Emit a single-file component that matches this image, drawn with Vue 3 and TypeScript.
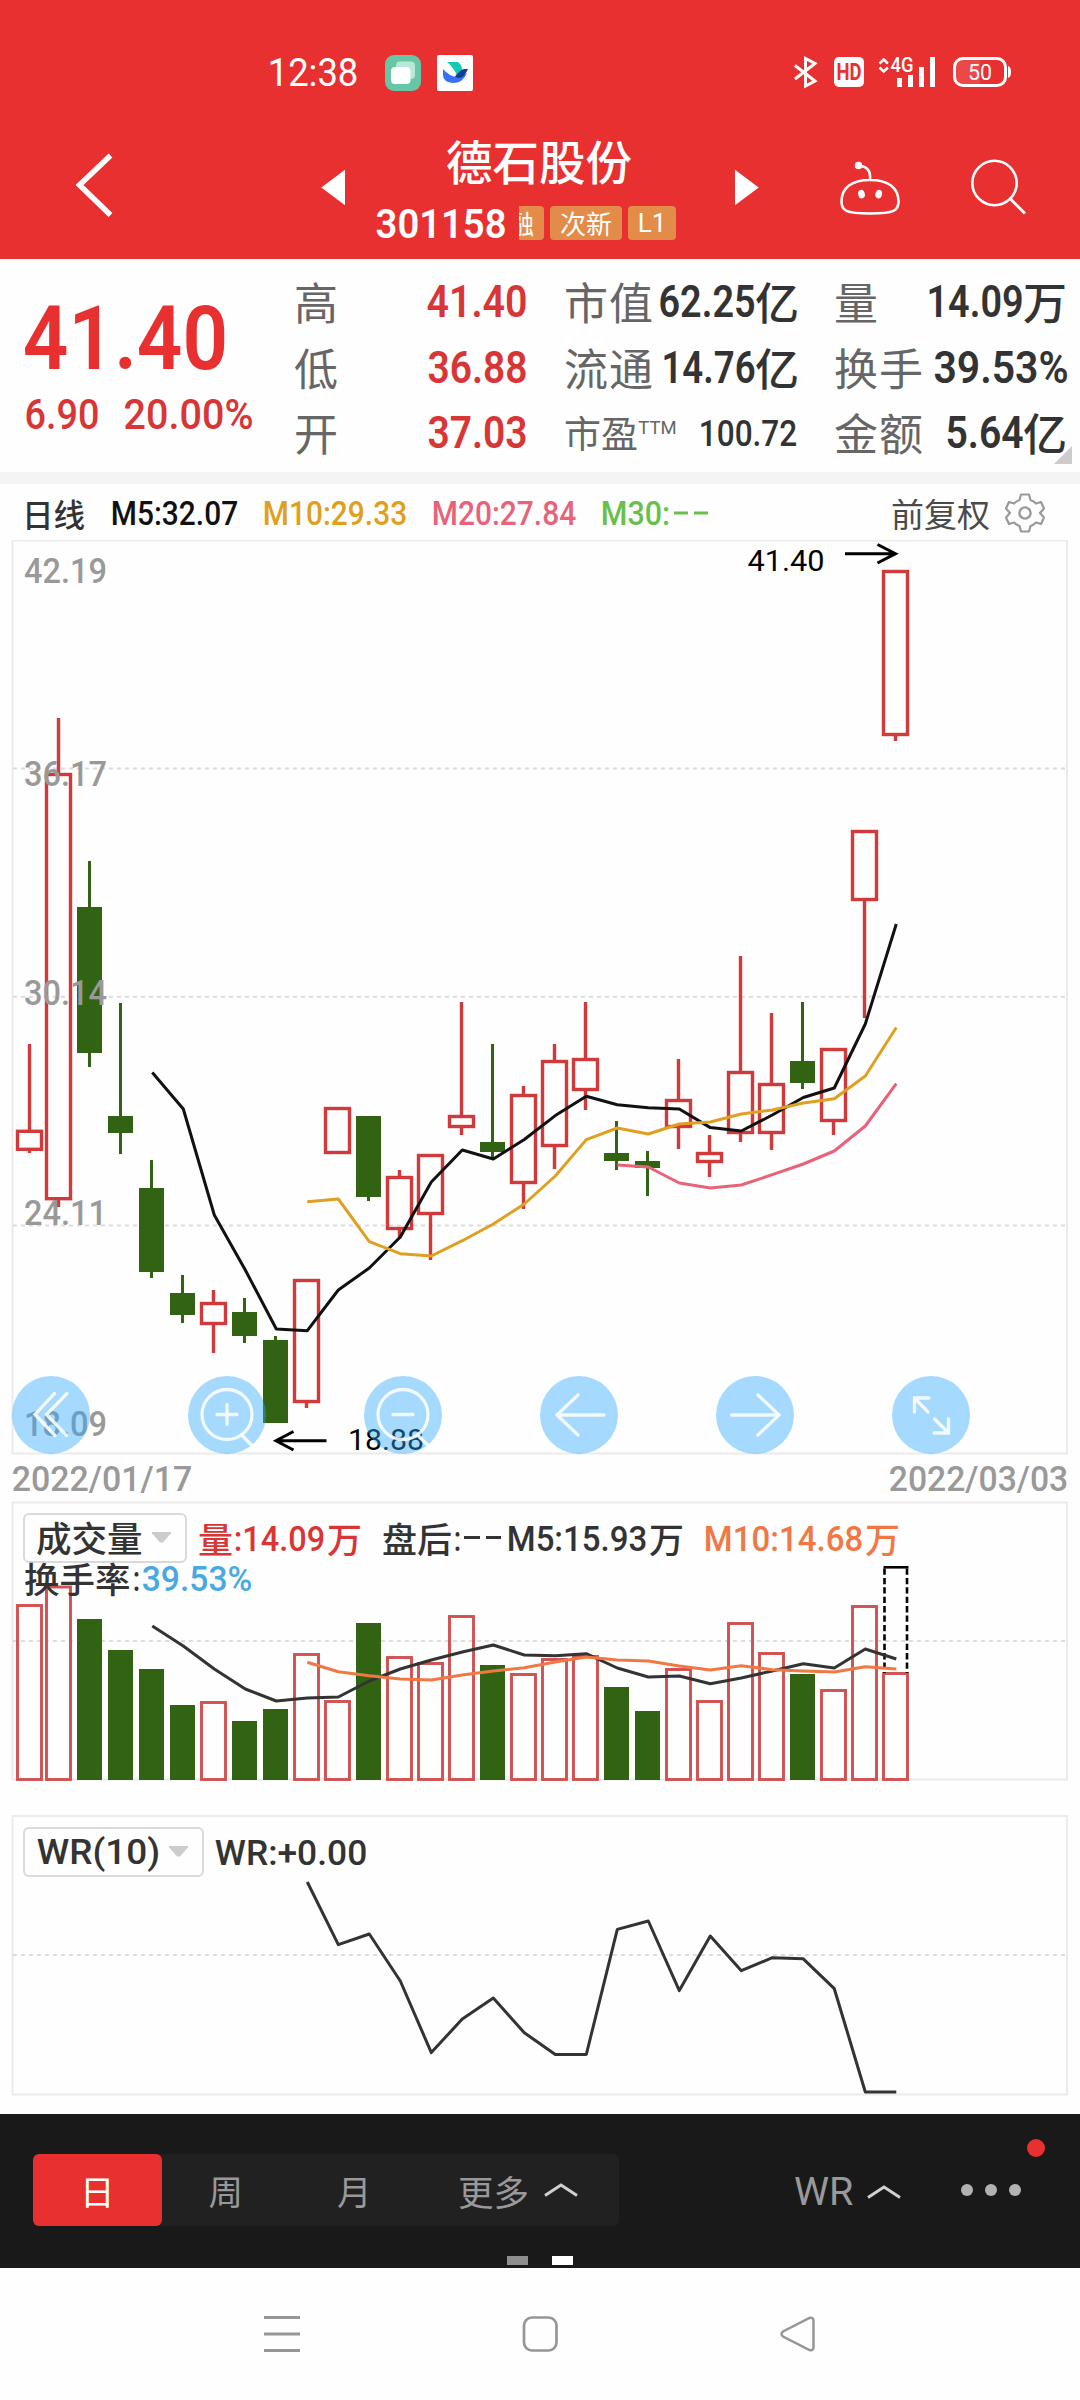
<script setup lang="ts">
import { h, type FunctionalComponent } from 'vue'

interface FitProps {
  t: string
  w: number
  c: number
  weight?: number
}

/* Condensed label: w is the drawn width, c the capital height. */
const Fit: FunctionalComponent<FitProps> = (p) => {
  const size = p.c / 0.711
  const side = size * 0.035
  return h('svg', { class: 'fit', width: p.w, height: p.c, overflow: 'visible' }, [
    h(
      'text',
      {
        x: -side,
        y: p.c,
        'font-size': size,
        'font-weight': p.weight ?? 500,
        'font-family': 'Roboto, sans-serif',
        fill: 'currentColor',
        textLength: p.w + side * 2,
        lengthAdjust: 'spacingAndGlyphs',
      },
      p.t,
    ),
  ])
}
Fit.props = ['t', 'w', 'c', 'weight']

/* [rising, high, top, bottom, low, volumeTop] in chart units */
type Day = [number, number, number, number, number, number]
const days: Day[] = [
  [1, 1044, 1131.3, 1149.3, 1153, 1605.5],
  [1, 718, 774.5, 1198.7, 1207, 1587],
  [0, 861, 907, 1053, 1067, 1619],
  [0, 1003, 1116, 1133, 1154, 1650],
  [0, 1160, 1188, 1272, 1278, 1669],
  [0, 1275, 1293, 1315, 1323, 1705],
  [1, 1290, 1303.5, 1323.5, 1353, 1702.5],
  [0, 1298, 1312, 1336, 1343, 1721],
  [0, 1336, 1340, 1423, 1423, 1709],
  [1, 1280.5, 1280.5, 1401.5, 1408, 1654.5],
  [1, 1108.5, 1108.5, 1152.5, 1152.5, 1701.5],
  [0, 1116, 1116, 1197, 1201, 1623],
  [1, 1170, 1177.5, 1228.5, 1239, 1657.5],
  [1, 1155.5, 1155.5, 1213.5, 1260, 1663.5],
  [1, 1002, 1116.5, 1126.5, 1135, 1616.5],
  [0, 1044, 1142, 1152, 1158, 1665],
  [1, 1086, 1095.5, 1182.5, 1209, 1674.5],
  [1, 1044, 1061.5, 1145.5, 1169, 1659.5],
  [1, 1002, 1059.5, 1089.5, 1110, 1656.5],
  [0, 1121, 1153, 1161, 1170, 1687],
  [0, 1151, 1161, 1168, 1196, 1711],
  [1, 1059, 1100.5, 1126.5, 1149, 1669.5],
  [1, 1135, 1153.5, 1161.5, 1177, 1701.5],
  [1, 956, 1072.5, 1132.5, 1142, 1623.5],
  [1, 1013, 1084.5, 1132.5, 1150, 1653.5],
  [0, 1002, 1061, 1083, 1089, 1674],
  [1, 1049.5, 1049.5, 1120.5, 1135, 1690.5],
  [1, 831.5, 831.5, 899.5, 1018, 1606.5],
  [1, 571.5, 571.5, 734.5, 741, 1673.5],
]

const xAt = (i: number): number => (i === 0 ? 29.5 : 27.5 + 31 * i)
const line = (start: number, ys: number[]): string =>
  ys.map((y, k) => `${28.3 + 31 * (start + k)},${y}`).join(' ')

const ma5 = line(4, [1072.5, 1109, 1215, 1270, 1329, 1330.7, 1290, 1268, 1237, 1182, 1150, 1159, 1139.5, 1115.6, 1096.3, 1104.7, 1107.7, 1109, 1127.6, 1131, 1115, 1097.5, 1088, 1024, 924])
const ma10 = line(9, [1201.7, 1199, 1241.7, 1253.7, 1256, 1240.7, 1224, 1204, 1176, 1139.6, 1128, 1134, 1124, 1122, 1114, 1110, 1103, 1098.8, 1076, 1027.5])
const ma20 = line(19, [1165, 1167, 1183, 1188, 1185, 1174.7, 1164, 1151, 1126, 1083.6])
const vol5 = line(4, [1626, 1646, 1669, 1689, 1701, 1698, 1697, 1681, 1669, 1660, 1652, 1645, 1655, 1655.7, 1653.7, 1668, 1677, 1676, 1683.7, 1678, 1671, 1663.7, 1668, 1649, 1659])
const vol10 = line(9, [1662.3, 1671.7, 1675.7, 1679, 1680, 1675, 1671, 1667.7, 1662, 1657, 1660, 1661, 1666, 1670, 1665.7, 1669.7, 1671, 1672, 1666.7, 1669])
const wr = line(9, [1882, 1944.7, 1934, 1981, 2052.6, 2019, 1998, 2032.7, 2054.5, 2054.5, 1929.4, 1921, 1990.6, 1936, 1970.7, 1957.7, 1958.8, 1988.7, 2092, 2092])

const axis: [string, number][] = [
  ['42.19', 583],
  ['36.17', 786],
  ['30.14', 1005],
  ['24.11', 1225],
  ['18.09', 1436],
]
const prices: [string, string, number][] = [
  ['高', '41.40', 98],
  ['低', '36.88', 97],
  ['开', '37.03', 97],
]
</script>

<template>
  <div class="screen">
    <header class="header">
      <div class="status">
        <Fit class="clock" t="12:38" :w="88" :c="27" :weight="400" />
        <svg class="app-a" width="36" height="36" viewBox="0 0 36 36">
          <rect width="36" height="36" rx="9" fill="#66c6a6" />
          <rect x="11" y="6.5" width="19" height="17.500" rx="4" fill="#b9e8d9" />
          <rect x="6" y="12" width="19.500" height="17" rx="4" fill="#fff" />
        </svg>
        <svg class="app-b" width="36" height="36" viewBox="0 0 36 36">
          <rect width="36" height="36" rx="2" fill="#fff" />
          <path d="M10 7h11q4 3 4 8l-5 5q-4-8-10-13z" fill="#10ccb4" />
          <path d="M6 14q6 7 14 8l10-4q-4 10-14 10-10-1-10-8z" fill="#3a70f8" />
          <path d="M31 14q-3 0-4 0-4 1-9 7.500 4 3 8 0 3-3 5-7.500z" fill="#133c92" />
        </svg>
        <svg class="signals" width="225" height="36" viewBox="790 55 225 36">
          <path d="M795 65.500l20 15.500-9.500 5V58.500l9.500 5-20 15.500" fill="none" stroke="#fff" stroke-width="3" />
          <rect x="834" y="57" width="30" height="30" rx="5" fill="#fff" />
          <text x="836.500" y="80" font-size="23" font-weight="700" fill="#e93030" textLength="25" lengthAdjust="spacingAndGlyphs">HD</text>
          <path d="M879.500 63.500l4.200-4 4.200 4M879.500 67.500l4.200 4 4.200-4" fill="none" stroke="#fff" stroke-width="2.500" />
          <text x="890.500" y="72" font-size="20" font-weight="500" fill="#fff" textLength="23" lengthAdjust="spacingAndGlyphs">4G</text>
          <path d="M897 78h5v9h-5zM908 75h5v12h-5zM919 67h5v20h-5zM930 57h5v30h-5z" fill="#fff" />
          <path d="M980 58.500H963q-8.500 0-8.500 8.500v10q0 8.500 8.500 8.500h17z" fill="#fff" fill-opacity=".12" />
          <rect x="954.500" y="58.500" width="51" height="27" rx="8.500" fill="none" stroke="#fff" stroke-width="3" />
          <path d="M1008 66q3 1 3 6t-3 6z" fill="#fff" />
          <text x="968" y="79.500" font-size="21.500" fill="#fff" textLength="24" lengthAdjust="spacingAndGlyphs">50</text>
        </svg>
      </div>
      <div class="title-bar">
        <svg class="back" width="50" height="70" viewBox="70 149.500 50 70">
          <path d="M110.500 155L79.500 184.500l31 30" fill="none" stroke="#fff" stroke-width="5.500" />
        </svg>
        <svg class="prev" width="35" height="70" viewBox="315 149.500 35 70">
          <path d="M345 169.300v35.400L321.300 187z" fill="#fff" />
        </svg>
        <div class="names">
          <h1>德石股份</h1>
          <div class="code">
            <Fit t="301158" :w="128" :c="29.5" :weight="600" />
            <span class="tag cut"><i>融</i></span>
            <span class="tag wide">次新</span>
            <span class="tag level">L1</span>
          </div>
        </div>
        <svg class="next" width="35" height="70" viewBox="730 149.500 35 70">
          <path d="M735 169.300v35.400L758.700 187z" fill="#fff" />
        </svg>
        <svg class="robot" width="70" height="70" viewBox="835 149.500 70 70">
          <path d="M870 179.500c18 0 28.500 7.500 28.500 21.500 0 9-4 12-28.500 12s-28.500-3-28.500-12c0-14 10.500-21.500 28.500-21.500zM859 165.500c8 0 12 5 11 13.500" fill="none" stroke="#fff" stroke-width="2.600" />
          <circle cx="858.500" cy="165" r="3.700" fill="#fff" />
          <ellipse cx="861.500" cy="193.600" rx="3.300" ry="4.300" fill="#fff" transform="rotate(-14 861.500 193.600)" />
          <ellipse cx="878.700" cy="193.600" rx="3.300" ry="4.300" fill="#fff" transform="rotate(14 878.700 193.600)" />
        </svg>
        <svg class="search" width="65" height="70" viewBox="965 149.500 65 70">
          <circle cx="994.500" cy="182.500" r="22.200" fill="none" stroke="#fff" stroke-width="2.600" />
          <path d="M1010.500 198.500l14.500 14.500" stroke="#fff" stroke-width="3" />
        </svg>
      </div>
    </header>

    <section class="quote">
      <div class="last">
        <Fit t="41.40" :w="199" :c="63.5" :weight="600" />
        <div class="change">
          <Fit t="6.90" :w="72" :c="30.5" />
          <Fit t="20.00%" :w="127" :c="30.5" />
        </div>
      </div>
      <div class="stats first">
        <div v-for="p in prices" :key="p[0]" class="stat up">
          <span class="label">{{ p[0] }}</span>
          <Fit :t="p[1]" :w="p[2]" :c="32" :weight="600" />
        </div>
      </div>
      <div class="stats second">
        <div class="stat"><span class="label">市值</span><b><Fit t="62.25" :w="94" :c="32" :weight="600" /><i>亿</i></b></div>
        <div class="stat"><span class="label">流通</span><b><Fit t="14.76" :w="91" :c="32" :weight="600" /><i>亿</i></b></div>
        <div class="stat pe">
          <span class="label small">市盈</span><Fit class="ttm" t="TTM" :w="37" :c="13.5" :weight="400" />
          <Fit class="pe-value" t="100.72" :w="96" :c="26.5" />
        </div>
      </div>
      <div class="stats third">
        <div class="stat"><span class="label">量</span><b><Fit t="14.09" :w="94" :c="32" :weight="600" /><i>万</i></b></div>
        <div class="stat"><span class="label">换手</span><b class="rate"><Fit t="39.53%" :w="132" :c="32" :weight="600" /></b></div>
        <div class="stat"><span class="label">金额</span><b><Fit t="5.64" :w="75" :c="32" :weight="600" /><i>亿</i></b></div>
      </div>
      <span class="corner"></span>
    </section>

    <section class="averages">
      <span class="period">日线</span>
      <Fit class="m5" t="M5:32.07" :w="125" :c="23.500" />
      <Fit class="m10" t="M10:29.33" :w="142" :c="23.500" />
      <Fit class="m20" t="M20:27.84" :w="142" :c="23.500" />
      <Fit class="m30" t="M30:" :w="67" :c="23.500" />
      <svg class="dashes" width="36" height="24" viewBox="0 0 36 24"><path d="M1 12h14M21 12h14" stroke="#6abf4b" stroke-width="3" /></svg>
      <span class="adjust">前复权</span>
      <svg class="gear" width="40" height="40" viewBox="-20 -20 40 40">
        <path d="M-4-18.500H4L5.500-13q3 1 5.500 3.500L16-11l3 6.500-4 4.500 4 4.500-3 6.500-5-1.500Q8.500 12 5.500 13L4 18.500H-4L-5.500 13q-3-1-5.500-3.500L-16 11l-3-6.500 4-4.500-4-4.500 3-6.500 5 1.500q2.500-2.500 5.500-3.500z" fill="none" stroke="#999" stroke-width="2.200" stroke-linejoin="round" />
        <circle r="5.600" fill="none" stroke="#999" stroke-width="2.400" />
      </svg>
    </section>

    <section class="kline">
      <svg class="plot" width="1080" height="915" viewBox="0 540 1080 915">
        <rect x="12.500" y="540.500" width="1054.500" height="913" fill="none" stroke="#ebebeb" stroke-width="2" />
        <path d="M13 768.500H1066M13 996.800H1066M13 1225.500H1066" stroke="#dcdcdc" stroke-width="2" stroke-dasharray="4 4" />
        <g v-for="(d, i) in days" :key="i">
          <template v-if="d[0]">
            <path :d="`M${xAt(i)} ${d[1]}V${d[2]}M${xAt(i)} ${d[3]}V${d[4]}`" stroke="#d03a3a" stroke-width="3.400" />
            <rect :x="xAt(i) - 12" :y="d[2]" width="24" :height="d[3] - d[2]" fill="none" stroke="#d03a3a" stroke-width="3.400" />
          </template>
          <template v-else>
            <path :d="`M${xAt(i)} ${d[1]}V${d[4]}`" stroke="#316313" stroke-width="3" />
            <rect :x="xAt(i) - 12.500" :y="d[2]" width="25" :height="d[3] - d[2]" fill="#316313" />
          </template>
        </g>
        <g fill="none" stroke-width="3" stroke-linejoin="round">
          <polyline :points="ma5" stroke="#111" />
          <polyline :points="ma10" stroke="#dfa020" />
          <polyline :points="ma20" stroke="#e86278" />
        </g>
        <text v-for="a in axis" :key="a[0]" class="axis" x="24" :y="a[1]" textLength="83" lengthAdjust="spacingAndGlyphs">{{ a[0] }}</text>
        <text class="mark" x="747.500" y="571" textLength="77" lengthAdjust="spacingAndGlyphs">41.40</text>
        <text class="mark" x="348" y="1450" textLength="76" lengthAdjust="spacingAndGlyphs">18.88</text>
        <path d="M845 553.700h50M877.500 544.500l18 9.200-18 9.300M326.500 1440.700h-50M293.500 1431.500l-17.500 9.200 17.500 9.300" fill="none" stroke="#000" stroke-width="3" />
      </svg>
      <div class="controls">
        <span class="round"><svg viewBox="0 0 78 78"><path d="M42.500 17.500L23 38.500l20 21M55 17.500L34.500 38.500l20 21" /></svg></span>
        <span class="round"><svg viewBox="0 0 78 78"><circle cx="39" cy="38.500" r="25" /><path d="M53.500 59l10 10M29 38.500h20M39 28.500v20" /></svg></span>
        <span class="round"><svg viewBox="0 0 78 78"><circle cx="39" cy="38.500" r="25" /><path d="M53.500 59l10 10M29 38.500h20" /></svg></span>
        <span class="round"><svg viewBox="0 0 78 78"><path d="M64 39H17M38 19L17 39l21 20" /></svg></span>
        <span class="round"><svg viewBox="0 0 78 78"><path d="M15.500 39H63M42 19l21 20-21 20" /></svg></span>
        <span class="round"><svg viewBox="0 0 78 78"><path d="M22.500 36V22H37M23 22.500L36 36M56.500 43v14H42M56 56.500L42.500 43" /></svg></span>
      </div>
    </section>
    <div class="dates">
      <Fit t="2022/01/17" :w="178" :c="25.500" />
      <Fit t="2022/03/03" :w="177" :c="25.500" />
    </div>

    <section class="volume">
      <svg class="plot" width="1080" height="281" viewBox="0 1501 1080 281">
        <rect x="12.500" y="1502.500" width="1054.500" height="277" fill="none" stroke="#ebebeb" stroke-width="2" />
        <path d="M13 1641H1066" stroke="#dcdcdc" stroke-width="2" stroke-dasharray="4 4" />
        <template v-for="(d, i) in days" :key="i">
          <rect v-if="d[0]" :x="xAt(i) - 12" :y="d[5]" width="24" :height="1779.500 - d[5]" fill="none" stroke="#d15050" stroke-width="2.900" />
          <rect v-else :x="xAt(i) - 12.500" :y="d[5]" width="25" :height="1780 - d[5]" fill="#316313" />
        </template>
        <path d="M884.500 1568.500V1673M907 1568.500V1673" stroke="#000" stroke-width="2.600" stroke-dasharray="6.300 3.100" />
        <path d="M883.500 1567.300h25" stroke="#000" stroke-width="2.600" />
        <g fill="none" stroke-width="3" stroke-linejoin="round">
          <polyline :points="vol5" stroke="#333" />
          <polyline :points="vol10" stroke="#f07845" />
        </g>
      </svg>
      <div class="legend">
        <span class="picker"><span>成交量</span><i class="caret"></i></span>
        <span class="item now"><i>量</i><Fit t=":14.09" :w="89" :c="25" /><i>万</i></span>
        <span class="item after"><i>盘后</i><Fit t=":" :w="5" :c="25" /><svg width="40" height="24" viewBox="0 0 40 24"><path d="M1 11.500h16M23 11.500h15" stroke="#333" stroke-width="3" /></svg></span>
        <span class="item v5"><Fit t="M5:15.93" :w="138" :c="25" /><i>万</i></span>
        <span class="item v10"><Fit t="M10:14.68" :w="157" :c="25" /><i>万</i></span>
      </div>
      <div class="turnover">
        <span>换手率</span><Fit t=":" :w="5" :c="25" /><Fit class="rate" t="39.53%" :w="108" :c="25" />
      </div>
    </section>

    <section class="wr">
      <svg class="plot" width="1080" height="281" viewBox="0 1815 1080 281">
        <rect x="12.500" y="1816" width="1054.500" height="278.500" fill="none" stroke="#ebebeb" stroke-width="2" />
        <path d="M13 1955H1066" stroke="#dcdcdc" stroke-width="2" stroke-dasharray="4 4" />
        <polyline :points="wr" fill="none" stroke="#333" stroke-width="3" stroke-linejoin="round" />
      </svg>
      <div class="legend">
        <span class="picker"><Fit class="pick-name" t="WR(10)" :w="121" :c="25" /><i class="caret"></i></span>
        <Fit class="wr-value" t="WR:+0.00" :w="150" :c="25" />
      </div>
    </section>

    <footer class="toolbar">
      <div class="tabs">
        <span class="tab active">日</span>
        <span class="tab">周</span>
        <span class="tab">月</span>
        <span class="tab more">更多<svg width="36" height="16" viewBox="0 0 36 16"><path d="M2 13.500L18 3l16 10.500" fill="none" stroke="#d0d0d0" stroke-width="3" /></svg></span>
      </div>
      <span class="indicator">WR<svg width="36" height="16" viewBox="0 0 36 16"><path d="M2 13.500L18 3l16 10.500" fill="none" stroke="#d0d0d0" stroke-width="3" /></svg></span>
      <span class="dots"><i></i><i></i><i></i><em class="badge"></em></span>
      <div class="pager"><i></i><i class="on"></i></div>
    </footer>

    <nav class="system">
      <svg width="40" height="40" viewBox="262 2314 40 40"><path d="M264 2317.500h36M264 2334h36M264 2350.500h36" stroke="#969696" stroke-width="2.800" /></svg>
      <svg width="40" height="40" viewBox="520 2314 40 40"><rect x="524" y="2317.500" width="32.500" height="33" rx="8" fill="none" stroke="#969696" stroke-width="2.700" /></svg>
      <svg width="40" height="40" viewBox="778 2314 40 40"><path d="M783 2331.500q-3 2.500 0 5l26.500 13.500q4 1 4-3v-26q0-4-4-3z" fill="none" stroke="#969696" stroke-width="2.500" /></svg>
    </nav>
  </div>
</template>

<style>
body {
  background: #fefefe;
}
</style>

<style scoped>
.screen {
  width: 1080px;
  height: 2400px;
  overflow: hidden;
  display: flex;
  flex-direction: column;
  background: #fefefe;
  color: #333;
  font-family: "Noto Sans CJK SC", sans-serif;
}
svg {
  display: block;
  flex: none;
}
svg text {
  font-family: Roboto, sans-serif;
}
i {
  font-style: normal;
}
.header {
  height: 259px;
  background: #e93030;
  color: #fff;
}
.status {
  height: 36px;
  padding: 55px 0 19px 269px;
  display: flex;
  align-items: center;
}
.clock {
  margin-bottom: 2px;
}
.app-a {
  margin-left: 28px;
}
.app-b {
  margin-left: 16px;
}
.signals {
  margin-left: 317px;
}
.title-bar {
  height: 149px;
  display: flex;
  align-items: center;
}
.back {
  margin-left: 70px;
}
.prev {
  margin-left: 195px;
}
.names {
  width: 299px;
  height: 110px;
  margin-left: 27px;
  display: flex;
  flex-direction: column;
  justify-content: flex-end;
}
h1 {
  margin: 0 0 16px 69px;
  flex: none;
  font-size: 46.500px;
  line-height: 60px;
  font-weight: 500;
  white-space: nowrap;
}
.code {
  display: flex;
  align-items: center;
}
.tag {
  height: 34px;
  border-radius: 4px;
  background: #e38b48;
  font-size: 26px;
  line-height: 33px;
  text-align: center;
  white-space: nowrap;
}
.cut {
  width: 25px;
  margin-left: 14px;
  border-radius: 0 4px 4px 0;
  overflow: hidden;
}
.cut i {
  display: block;
  margin-left: -11px;
  width: 26px;
}
.wide {
  width: 72px;
  margin-left: 6px;
}
.level {
  width: 48px;
  margin-left: 6px;
  font-family: Roboto, sans-serif;
  line-height: 35px;
}
.next {
  margin-left: 54px;
}
.robot {
  margin-left: 70px;
}
.search {
  margin-left: 60px;
}
.quote {
  position: relative;
  height: 213px;
  display: flex;
  border-bottom: 12px solid #f4f4f4;
}
.last {
  width: 270px;
  padding: 46px 0 0 26px;
  box-sizing: border-box;
  color: #e93030;
}
.change {
  display: flex;
  gap: 27px;
  margin-top: 29px;
  color: #d83636;
}
.stats {
  padding-top: 9.500px;
}
.stats.first {
  width: 232px;
  margin-left: 24px;
}
.stats.second {
  width: 235px;
  margin-left: 38px;
}
.stats.third {
  width: 233px;
  margin-left: 35px;
}
.stats .stat {
  height: 65.600px;
  display: flex;
  align-items: center;
  justify-content: space-between;
}
.up {
  color: #d83636;
}
.label {
  font-size: 44px;
  letter-spacing: 1px;
  line-height: 60px;
  color: #666;
  white-space: nowrap;
}
.label.small {
  font-size: 37px;
  letter-spacing: 0;
}
.stat b {
  display: flex;
  align-items: center;
  font-weight: 500;
}
.stat b i {
  margin-left: 1px;
  font-size: 44px;
  line-height: 60px;
}
.stats .pe {
  justify-content: flex-start;
}
.ttm {
  margin: 0 0 12px 1px;
  color: #666;
}
.pe-value {
  margin-left: 24px;
}
.corner {
  position: absolute;
  right: 8px;
  bottom: 8px;
  border-left: 18px solid transparent;
  border-bottom: 18px solid #ccc;
}
.averages {
  height: 56px;
  padding: 2px 35px 0 22px;
  box-sizing: border-box;
  display: flex;
  align-items: center;
  white-space: nowrap;
}
.period {
  width: 62px;
  font-size: 31.500px;
  font-weight: 500;
}
.m5 {
  margin-left: 28px;
  color: #111;
}
.m10 {
  margin-left: 27px;
  color: #dfa020;
}
.m20 {
  margin-left: 27px;
  color: #e86278;
}
.m30 {
  margin-left: 27px;
  color: #6abf4b;
}
.dashes {
  margin-left: 4px;
}
.adjust {
  margin-left: auto;
  width: 99px;
  font-size: 33px;
  color: #4a4a4a;
}
.gear {
  margin-left: 15px;
}
.kline {
  position: relative;
  height: 915px;
}
.axis {
  font-size: 35px;
  font-weight: 500;
  fill: #999;
}
.mark {
  font-size: 30px;
}
.controls {
  position: absolute;
  left: 12px;
  top: 836px;
  display: flex;
  gap: 98px;
}
.round {
  width: 78px;
  height: 78px;
  border-radius: 50%;
  background: rgba(43, 167, 255, 0.42);
}
.round svg {
  fill: none;
  stroke: #fff;
  stroke-width: 3.300;
  stroke-opacity: 0.85;
  stroke-linecap: round;
}
.dates {
  height: 46px;
  padding: 0 13px;
  display: flex;
  align-items: center;
  justify-content: space-between;
  color: #999;
}
.volume,
.wr {
  position: relative;
  height: 281px;
}
.wr {
  margin-top: 33px;
}
.legend {
  position: absolute;
  left: 23px;
  top: 12px;
  display: flex;
  align-items: center;
  font-size: 35px;
  line-height: 44px;
  font-weight: 500;
  white-space: nowrap;
}
.picker {
  box-sizing: border-box;
  width: 164px;
  height: 50px;
  padding: 0 14px 2px 11px;
  border: 2px solid #dadada;
  border-radius: 6px;
  display: flex;
  align-items: center;
  justify-content: space-between;
  background: #fefefe;
  font-size: 35.500px;
}
.pick-name {
  margin-left: 2px;
}
.wr .picker {
  width: 181px;
}
.caret {
  width: 19px;
  height: 11px;
  background: #ccc;
  clip-path: polygon(0 0, 100% 0, 100% 15%, 58% 100%, 42% 100%, 0 15%);
}
.item {
  display: flex;
  align-items: center;
}
.now {
  margin-left: 11px;
  color: #d83636;
}
.now svg {
  margin: 0 3px 0 2px;
}
.after {
  margin-left: 20px;
}
.after svg {
  margin-left: 3px;
}
.v5 {
  margin-left: 5px;
}
.v5 i,
.v10 i {
  margin-left: 3px;
}
.v10 {
  margin-left: 21px;
  color: #f07845;
}
.turnover {
  position: absolute;
  left: 24px;
  top: 55px;
  display: flex;
  align-items: center;
  font-size: 35.500px;
  line-height: 44px;
  font-weight: 500;
  white-space: nowrap;
}
.turnover svg {
  margin-left: 3.500px;
}
.turnover .rate {
  color: #48a8e2;
}
.wr-value {
  margin-left: 12px;
}
.toolbar {
  position: relative;
  height: 154px;
  margin-top: 18px;
  display: flex;
  align-items: flex-start;
  background: #191919;
  color: #999;
}
.tabs {
  width: 586px;
  height: 72px;
  margin: 40px 0 0 33px;
  border-radius: 6px;
  display: flex;
  background: #212121;
}
.tab {
  width: 128.500px;
  font-size: 34.500px;
  line-height: 73px;
  text-align: center;
}
.active {
  border-radius: 6px;
  background: #e93030;
  color: #fff;
  height: 72px;
}
.more {
  width: 200px;
  display: flex;
  align-items: center;
  justify-content: center;
  gap: 14px;
  font-size: 35.500px;
}
.indicator {
  margin: 40px 0 0 175px;
  display: flex;
  align-items: center;
  gap: 13px;
  font-family: Roboto, sans-serif;
  font-size: 39.500px;
  line-height: 75px;
}
.dots {
  position: relative;
  margin: 70px 0 0 59px;
  display: flex;
  gap: 12px;
}
.dots i {
  width: 12px;
  height: 12px;
  border-radius: 50%;
  background: #b2b2b2;
}
.badge {
  position: absolute;
  left: 66px;
  top: -45px;
  width: 18px;
  height: 18px;
  border-radius: 50%;
  background: #e93030;
}
.pager {
  position: absolute;
  left: 507px;
  bottom: 3px;
  display: flex;
  gap: 24px;
}
.pager i {
  width: 21px;
  height: 9px;
  background: #8e8e8e;
}
.pager .on {
  background: #fff;
}
.system {
  height: 132px;
  padding: 0 262px;
  display: flex;
  align-items: center;
  justify-content: space-between;
}
</style>
